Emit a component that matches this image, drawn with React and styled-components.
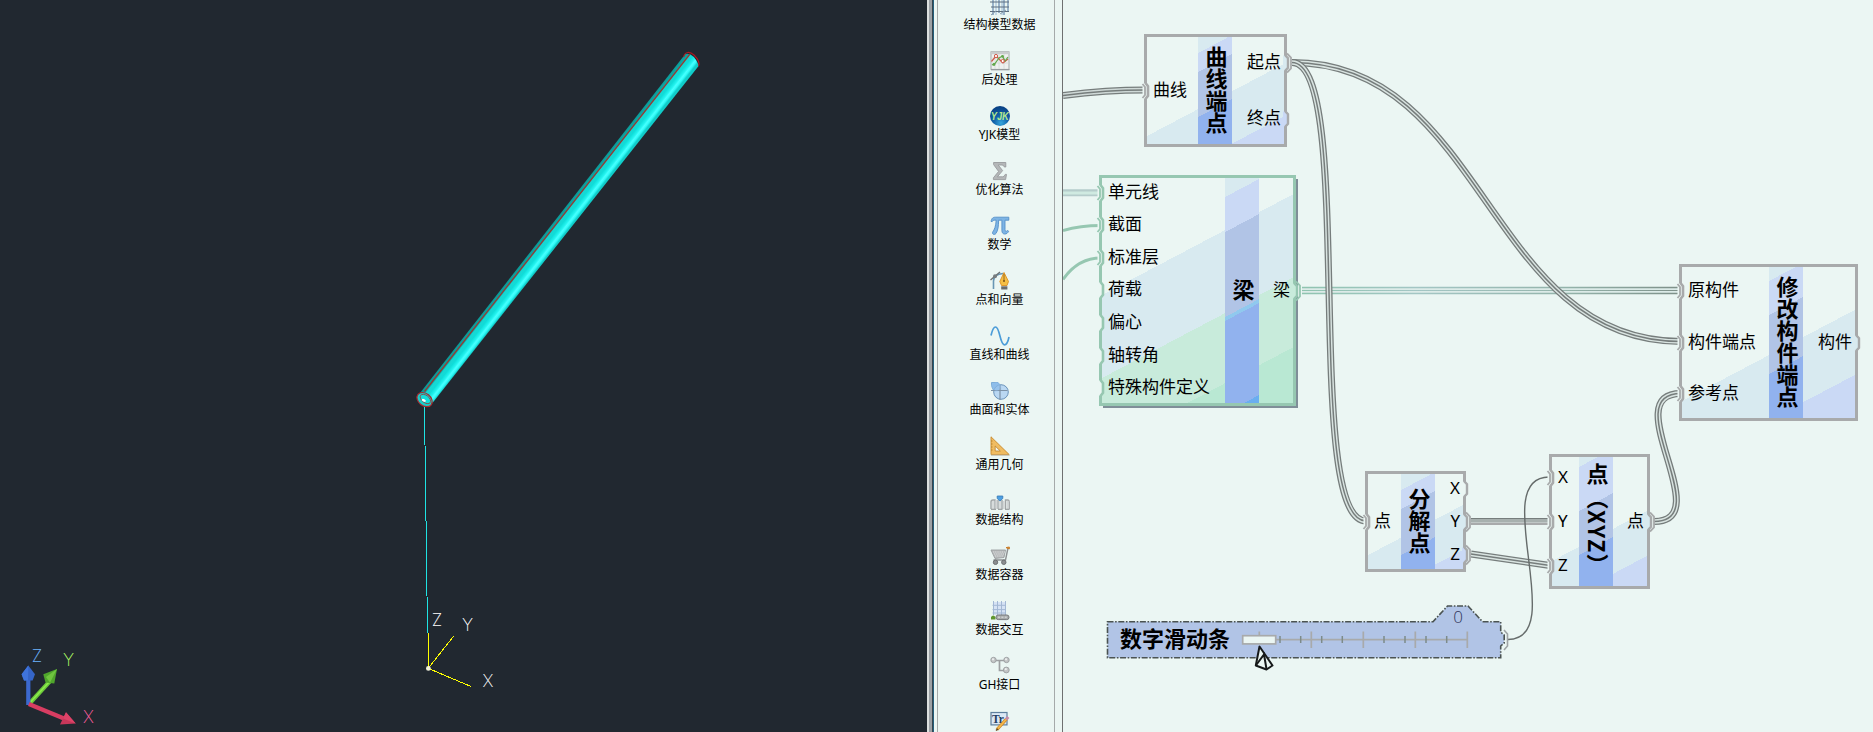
import React from 'react';
import styled, { createGlobalStyle } from 'styled-components';

const GlobalStyle = createGlobalStyle`
  html, body { margin: 0; padding: 0; overflow: hidden; background: #ebf6f3; }
  * { box-sizing: border-box; }
  body { font-family: 'Noto Sans', 'Noto Sans CJK SC', sans-serif; color: #000; }
`;

const CANVAS = '#ebf6f3';
const GREY = '#a8aaab';
const GREEN = '#96c7b1';
const WIRE = '#767d7c';

const Screen = styled.div`
  display: flex;
  width: 1873px;
  height: 732px;
  overflow: hidden;
`;

const Viewport = styled.div`
  flex: 0 0 927px;
  background: #212830;
  svg { display: block; }
`;

const AxisLabel = styled.text`
  font-family: 'Inter', 'Roboto', sans-serif;
  font-weight: 200;
  font-size: 17px;
  text-anchor: middle;
  dominant-baseline: central;
  fill: ${(p) => p.$color};
`;

const Splitter = styled.div`
  flex: 0 0 7px;
  border-left: 2px solid #dde0df;
  border-right: 1px solid #24607c;
  background: linear-gradient(to right, #9ca1a5 0 3px, #36444e 3px 4px);
`;

const Sidebar = styled.div`
  flex: 0 0 129px;
  display: flex;
  padding: 0 7px 0 3px;
  border-right: 1px solid #6e7070;
  background: ${CANVAS};
`;

const SidebarList = styled.div`
  flex: 1;
  border-left: 1px solid #a5aaaa;
  border-right: 1px solid #a5aaaa;
  padding-left: 7px;
  overflow: hidden;
`;

const SidebarStack = styled.div`
  display: flex;
  flex-direction: column;
  margin-top: -4px;
`;

const SidebarItem = styled.div`
  display: flex;
  flex-direction: column;
  align-items: center;
  height: 55px;
  flex: none;
  font-size: 12px;
  line-height: 17px;
  white-space: nowrap;
  svg { display: block; overflow: visible; }
`;

const Canvas = styled.div`
  position: relative;
  flex: 1;
  background: ${CANVAS};
  overflow: hidden;
`;

const WireLayer = styled.svg`
  position: absolute;
  inset: 0;
`;

const NodeBox = styled.div`
  position: absolute;
  display: flex;
  left: ${(p) => p.$x}px;
  top: ${(p) => p.$y}px;
  width: ${(p) => p.$w}px;
  height: ${(p) => p.$h}px;
  border: 3px solid ${(p) => p.$line};
  background: ${(p) => p.$bg};
  box-shadow: ${(p) => (p.$shadow ? '3px 3px 0 -1px #7f8e98' : 'none')};
`;

const PortColumn = styled.div`
  display: flex;
  flex-direction: column;
  justify-content: ${(p) => (p.$single ? 'center' : 'space-between')};
  ${(p) => (p.$w ? `flex: 0 0 ${p.$w}px;` : 'flex: 1;')}
`;

const PortRow = styled.div`
  position: relative;
  display: flex;
  align-items: center;
  justify-content: ${(p) => (p.$out ? 'flex-end' : 'flex-start')};
  height: ${(p) => p.$h}px;
  padding: ${(p) => (p.$out ? '0 3px 2px 0' : '0 0 2px 6px')};
  font-size: 17px;
  line-height: 20px;
  white-space: nowrap;
`;

const PortMark = styled.svg`
  position: absolute;
  top: calc(50% - 11px);
  ${(p) => (p.$out ? 'right: -9px;' : 'left: -5px;')}
  overflow: visible;
`;

const TitleBand = styled.div`
  flex: 0 0 34px;
  display: flex;
  align-items: center;
  justify-content: center;
  padding: 0 0 2px 3px;
  background: ${(p) => p.$bg};
`;

const Title = styled.span`
  writing-mode: vertical-rl;
  font-family: 'Noto Sans CJK SC', sans-serif;
  font-size: 22px;
  font-weight: 700;
  line-height: 30px;
  letter-spacing: ${(p) => p.$tracking || 0}px;
  white-space: nowrap;
`;

// Diagonal bands: each stop is [height at the left edge, colour of the band below it]
const bands = (first, stops) => {
  const parts = [];
  let colour = first;
  let from = '0px';
  stops.forEach(([y, next]) => {
    const at = `${(y * 0.8847).toFixed(1)}px`;
    parts.push(`${colour} ${from} ${at}`);
    colour = next;
    from = at;
  });
  parts.push(`${colour} ${from} 100%`);
  return `linear-gradient(152.2deg, ${parts.join(', ')})`;
};

const InPort = ({ linked, line }) => (
  <PortMark width="10" height="22">
    <path d="M0.5 3.5H3.5L6 6.5V15.5L3.5 18.5H0.5Z" fill={CANVAS} />
    <path d="M3.5 3L6 6.2V15.8L3.5 19" fill="none" stroke={line} strokeWidth="2.6" />
    {linked && <path d="M0.5 4L3 7V15L0.5 18" fill="none" stroke={line} strokeWidth="1.8" />}
  </PortMark>
);

const OutPort = ({ linked, line, fill }) => (
  <PortMark width="10" height="22" $out>
    <path d="M0 3.5H1.5L4.5 6.5V15.5L1.5 18.5H0Z" fill={fill} />
    <path d="M2 3L5 6.2V15.8L2 19" fill="none" stroke={line} strokeWidth="2.4" />
    {linked && <path d="M4 1.5L8 5.5V16.5L4 20.5" fill="none" stroke={line} strokeWidth="1.8" />}
  </PortMark>
);

const GraphNode = ({ x, y, w, h, line = GREY, bg, band, leftW, slotIn, slotOut, inputs, outputs, title, tracking, shadow }) => (
  <NodeBox $x={x} $y={y} $w={w} $h={h} $line={line} $bg={bg} $shadow={shadow}>
    <PortColumn $w={leftW} $single={inputs.length === 1}>
      {inputs.map(([name, linked]) => (
        <PortRow key={name} $h={slotIn}>
          <InPort linked={linked} line={line} />
          {name}
        </PortRow>
      ))}
    </PortColumn>
    <TitleBand $bg={band}>
      <Title $tracking={tracking}>{title}</Title>
    </TitleBand>
    <PortColumn $single={outputs.length === 1}>
      {outputs.map(([name, linked, fill]) => (
        <PortRow key={name} $h={slotOut} $out>
          <OutPort linked={linked} line={line} fill={fill} />
          {name}
        </PortRow>
      ))}
    </PortColumn>
  </NodeBox>
);

const P0 = '#ebf6f3';
const P1 = '#d8eaf0';
const P2 = '#cad9f5';
const P3 = '#b1c4e6';
const P4 = '#91b2ee';

const nodes = [
  {
    x: 81, y: 34, w: 143, h: 113, leftW: 51, slotIn: 30, slotOut: 51, title: '曲线端点',
    bg: bands(P0, [[99, P1], [151.5, P2]]),
    band: bands(P1, [[16, P2], [35, P3], [80, P4]]),
    inputs: [['曲线', true]],
    outputs: [['起点', true, P1], ['终点', false, P2]],
  },
  {
    x: 36, y: 175, w: 197, h: 231, leftW: 123, slotIn: 29, slotOut: 30, title: '梁', line: GREEN, shadow: true,
    bg: bands(P0, [[117, P1], [200, '#c8ebdb'], [270, '#b9e8d3']]),
    band: bands(P1, [[19, P2], [54, P3], [139, '#90c9ee'], [143, P4], [235, '#6aaef0']]),
    inputs: [['单元线', true], ['截面', true], ['标准层', true], ['荷载', false], ['偏心', false], ['轴转角', false], ['特殊构件定义', false]],
    outputs: [['梁', true, '#c8ebdb']],
  },
  {
    x: 302, y: 471, w: 101, h: 101, leftW: 33, slotIn: 30, slotOut: 29, title: '分解点',
    bg: bands(P0, [[81, P1], [126, P2]]),
    band: bands(P1, [[16, P2], [35, P3], [81, P4]]),
    inputs: [['点', true]],
    outputs: [['X', false, P0], ['Y', true, P1], ['Z', true, P2]],
  },
  {
    x: 486, y: 454, w: 101, h: 135, leftW: 27, slotIn: 41, slotOut: 30, title: '点（XYZ）', tracking: 1.5,
    bg: bands(P0, [[104, P1], [149, P2]]),
    band: bands(P1, [[10, P2], [54, P3], [98, P4]]),
    inputs: [['X', true], ['Y', true], ['Z', true]],
    outputs: [['点', true, P1]],
  },
  {
    x: 616, y: 264, w: 179, h: 157, leftW: 87, slotIn: 48, slotOut: 30, title: '修改构件端点',
    bg: bands(P0, [[134, P1], [199, P2]]),
    band: bands(P1, [[14, P2], [48, P3], [107, P4]]),
    inputs: [['原构件', true], ['构件端点', true], ['参考点', true]],
    outputs: [['构件', false, P1]],
  },
];

const TripleWire = ({ d, dark = WIRE, light = '#d9e4e1' }) => (
  <g fill="none">
    <path d={d} stroke={dark} strokeWidth="7" />
    <path d={d} stroke={light} strokeWidth="4.4" />
    <path d={d} stroke={dark} strokeWidth="1.5" />
  </g>
);

const Wires = () => (
  <WireLayer width="810" height="732">
    <defs>
      <linearGradient id="beamWire" gradientUnits="userSpaceOnUse" x1="239" y1="0" x2="618" y2="0">
        <stop offset="0" stopColor="#8fc4b0" />
        <stop offset="0.3" stopColor="#a3c6c4" />
        <stop offset="0.7" stopColor="#93b3aa" />
        <stop offset="1" stopColor="#7d8f88" />
      </linearGradient>
    </defs>
    <TripleWire d="M0 95.5C28 92 52 90 82 90" light="#cfd9d7" />
    <path d="M0 192.7H38" stroke="#b5cccb" strokeWidth="7" />
    <path d="M0 193H38" stroke="#cfeae1" strokeWidth="3" />
    <g fill="none" stroke={GREEN} strokeWidth="3">
      <path d="M0 230.5C12 227 24 225.5 38 225.5" />
      <path d="M0 279.5C10 265 22 258 38 258" />
    </g>
    <g fill="none" stroke="url(#beamWire)">
      <path d="M239 290.51L618 290.49" style={{ stroke: '#dcebe8' }} strokeWidth="6" />
      <path d="M239 287.51L618 287.49" strokeWidth="1.3" />
      <path d="M239 290.51L618 290.49" strokeWidth="1" />
      <path d="M239 293.51L618 293.49" strokeWidth="1.3" />
    </g>
    <TripleWire d="M229 62.5C423 62.5 424 341.5 618 341.5" />
    <TripleWire d="M229 62.5C293 62.5 239 521 303 521" />
    <TripleWire d="M591 521.5C656 521.5 552 393.5 618 393.5" />
    <g stroke={WIRE}>
      <path d="M408 521.5H487" stroke="#d9e4e1" strokeWidth="7" />
      <path d="M408 518.7H487" strokeWidth="1.4" />
      <path d="M408 521H487" strokeWidth="1.1" />
      <path d="M408 523.7H487" stroke={GREY} strokeWidth="2.4" />
    </g>
    <TripleWire d="M408 554L487 565.5" />
    <path d="M445 639.5C507 639.5 424 477 486 477" fill="none" stroke="#666c6b" strokeWidth="1.4" />
  </WireLayer>
);

const SliderNode = styled.div`
  position: absolute;
  left: 43px;
  top: 604px;
  width: 410px;
  height: 66px;
`;

const SliderShape = styled.svg`
  position: absolute;
  inset: 0;
  overflow: visible;
`;

const SliderBody = styled.div`
  position: relative;
  display: flex;
  align-items: center;
  height: 36px;
  margin-top: 18px;
  padding: 0 0 6px 14px;
`;

const SliderLabel = styled.span`
  font-family: 'Noto Sans CJK SC', sans-serif;
  font-size: 22px;
  font-weight: 700;
  line-height: 30px;
`;

const SliderValue = styled.span`
  position: absolute;
  left: 343px;
  top: 3px;
  width: 18px;
  text-align: center;
  font-family: 'Open Sans', 'Noto Sans', sans-serif;
  font-weight: 300;
  font-size: 17px;
  line-height: 20px;
  color: #30355a;
`;

const majors = [205.3, 257.3, 309.3, 361.3];
const minors = [174, 194.7, 215.7, 236.3, 278, 299, 320, 340.7];

const Slider = () => (
  <SliderNode>
    <SliderShape width="410" height="66">
      <path
        d="M1.5 17.7H327L341.5 2H362L376.5 17.7H394.7V28L398.2 31V39L394.7 42V53.7H1.5Z"
        fill={P3} stroke="#4b5352" strokeWidth="1.6" strokeDasharray="6 1.6 1.6 1.6"
      />
      <path d="M398 26L401.5 30V42L398 46" fill="none" stroke="#9ea3a5" strokeWidth="1.6" />
      <g stroke={GREY} strokeWidth="1.7">
        <path d="M170 35.6H361.5M153.3 27.5V33" />
        {majors.map((x) => <path key={x} d={`M${x} 27.5V44`} />)}
      </g>
      <g stroke="#7d8b89" strokeWidth="1.5">
        {minors.map((x) => <path key={x} d={`M${x} 32V39`} />)}
      </g>
      <rect x="136.7" y="31.7" width="33" height="8.2" fill={CANVAS} stroke={GREY} strokeWidth="1.7" />
      <path d="M153.5 42.5L149.8 61.5L160.5 65.5L166.5 61.5Z" fill={CANVAS} stroke="#16191a" strokeWidth="2" strokeLinejoin="round" />
      <path d="M149.8 61.5L158 50.5L160.5 65" fill="none" stroke="#16191a" strokeWidth="2" />
    </SliderShape>
    <SliderBody>
      <SliderLabel>数字滑动条</SliderLabel>
    </SliderBody>
    <SliderValue>0</SliderValue>
  </SliderNode>
);

const IconSvg = ({ children }) => (
  <svg width="20" height="20" viewBox="0 0 20 20" fill="none">{children}</svg>
);

const GlyphText = styled.text`
  font-family: ${(p) => p.$family || "'Liberation Serif', serif"};
  font-weight: 700;
  font-style: ${(p) => (p.$italic ? 'italic' : 'normal')};
  font-size: ${(p) => p.$size}px;
  text-anchor: middle;
`;

const icons = {
  frame: (
    <IconSvg>
      <path d="M3 0V19M9 0V17M14 0V19M18 0V16" stroke="#7898b8" strokeWidth="1.4" />
      <path d="M6 0V19M12 0V19" stroke="#a9c4dc" strokeWidth="1.2" />
      <path d="M0 6H19M1 11H19M0 15.5H19" stroke="#5f6f80" strokeWidth="1.2" />
      <path d="M1 19L6 15M10 18L16 14" stroke="#889cae" />
    </IconSvg>
  ),
  chart: (
    <IconSvg>
      <rect x="1" y="0.8" width="18" height="17.6" fill="#eef0ef" stroke="#a4a8aa" />
      <path d="M1 2H19" stroke="#c9cccd" strokeWidth="2.4" />
      <path d="M5 3V18M9 3V18M14 3V18M1 7H19M1 12H19" stroke="#d3d8d6" strokeWidth="0.8" />
      <path d="M1.5 10.5L6 5L10 9L13 12L18 8" stroke="#cf5a4a" strokeWidth="1.2" />
      <path d="M2 14L5 12.5L9 7L12.5 5L15 10L18 6" stroke="#62a84b" strokeWidth="1.2" />
      <circle cx="6" cy="5" r="1.6" fill="#fff" stroke="#cf5a4a" />
      <circle cx="12.7" cy="10" r="1.6" fill="#fff" stroke="#cf5a4a" />
      <circle cx="4" cy="13.5" r="1.4" fill="#62a84b" />
      <circle cx="12.5" cy="5.3" r="1.4" fill="#62a84b" />
      <path d="M1 18.8H19.5" stroke="#8e9295" />
    </IconSvg>
  ),
  yjk: (
    <IconSvg>
      <defs>
        <radialGradient id="globe" cx="0.55" cy="0.85" r="0.9">
          <stop offset="0" stopColor="#35a6dc" />
          <stop offset="0.4" stopColor="#1263ab" />
          <stop offset="1" stopColor="#063a7c" />
        </radialGradient>
      </defs>
      <circle cx="10" cy="10" r="10" fill="url(#globe)" />
      <GlyphText x="9.8" y="13.8" $size={10.5} $italic $family="'Liberation Sans', sans-serif" textLength="18" lengthAdjust="spacingAndGlyphs" fill="#b4e88c">YJK</GlyphText>
    </IconSvg>
  ),
  sigma: (
    <IconSvg>
      <path d="M3.6 1.5H15.8V6H14.3Q14 4 12 4H8.2L12.6 9.6L7.4 15.8H12.5Q14.6 15.8 15.2 13.4H16.5L15.6 18.6H3.4V16.8L8.6 10.4L3.6 3.6Z" fill="#b4b7b8" stroke="#989b9d" strokeWidth="0.9" />
    </IconSvg>
  ),
  pi: (
    <IconSvg>
      <path d="M1 5.4C1.8 2 3 1.2 5.5 1.2H18.8V4.2H15V13.6C15 15.6 16.6 15.8 17.8 14.4L18.6 15.2C17.4 18.8 11.9 19.4 11.9 14.6V4.2H8.6C8.6 10 8 14.5 6 17.4C4.6 19.2 2 18.6 2.6 16.2C4.6 13.6 5.8 10 6.2 4.2C4 4 3 4.2 2.2 5.6Z" fill="#7db4e4" stroke="#5590c8" strokeWidth="0.9" />
    </IconSvg>
  ),
  pen: (
    <IconSvg>
      <path d="M3.5 18V10C3.5 5 7 3 13 2.5" stroke="#6896b4" strokeWidth="1.6" />
      <path d="M0.5 9L10 1" stroke="#6d7274" strokeWidth="1.4" />
      <circle cx="5" cy="5.2" r="2" fill="#777c7e" />
      <path d="M14 1.5L18.5 10.5L17 14.5H11.5L9.8 10.5Z" fill="#f5bf45" stroke="#dc9024" strokeWidth="0.9" />
      <path d="M14 3V10" stroke="#9c6a1c" />
      <circle cx="14" cy="10" r="1" fill="#7c5214" />
      <rect x="11.2" y="15.3" width="6.2" height="3.2" fill="#6a6d6f" />
    </IconSvg>
  ),
  wave: (
    <IconSvg>
      <path d="M1 9.5C2.5 3 4 1 5.5 1C10 1 9.8 18.8 14.4 18.8C16.5 18.8 18 16 19 11" stroke="#4b9cd8" strokeWidth="1.7" />
    </IconSvg>
  ),
  solid: (
    <IconSvg>
      <path d="M1.5 1.5H8L11 6V9L6 10.5C3 10 1.2 6 1.5 1.5Z" fill="#8fc0ec" stroke="#6d9fd0" strokeWidth="0.8" />
      <circle cx="11" cy="11" r="7.3" fill="#b5d5f2" fillOpacity="0.9" stroke="#6a93ba" />
      <path d="M1 9.5H17.5M10 4V19" stroke="#7d92a6" strokeWidth="1.2" />
      <circle cx="6.5" cy="5.5" r="4.2" fill="#8dbcea" fillOpacity="0.7" />
    </IconSvg>
  ),
  ruler: (
    <IconSvg>
      <path d="M1 0.8L19.2 18.6H1Z" fill="#f0bc62" stroke="#c88a2e" strokeWidth="0.9" />
      <path d="M5.2 10L10.3 15H5.2Z" fill="#f4f6ee" stroke="#b9822f" strokeWidth="0.8" />
      <path d="M1 5H2.6M1 8H2.6M1 11H2.6M1 14H2.6" stroke="#a8731f" strokeWidth="0.7" />
      <path d="M1 19.3H19.5" stroke="#c4c4ba" />
    </IconSvg>
  ),
  array: (
    <IconSvg>
      <path d="M1 18V11Q1 9 3 9H5V18M8 18V9M12 18V9M15.5 18V9H18Q19.2 9 19.2 11V18" stroke="#a2a5a7" strokeWidth="1.4" />
      <path d="M3 18V10M6.3 18V9M10 18V10M13.8 18V10M17.5 18V10" stroke="#d3d5d6" strokeWidth="1.6" />
      <path d="M1 18.3H6M8 18.3H12.5M15 18.3H19.5" stroke="#8c9092" />
      <path d="M7.2 5H12.8V7.5L10 10L7.2 7.5Z" fill="#4d9fe2" stroke="#3578b4" strokeWidth="0.8" />
    </IconSvg>
  ),
  cart: (
    <IconSvg>
      <path d="M1 4H15.5L14 11.5L5 12.5Z" fill="#b7babb" stroke="#9b9ea0" strokeWidth="0.9" />
      <path d="M3 6H15M4 8H14.5M5 10H14" stroke="#e4e6e6" strokeWidth="0.8" strokeDasharray="1.2 1" />
      <path d="M18 2L15.5 14H3.5" stroke="#8d9092" strokeWidth="1.4" />
      <path d="M16 1.6L19.3 1V3Z" fill="#e2963c" stroke="#c97e2a" />
      <circle cx="5.5" cy="16.3" r="2.2" fill="#8b8e90" stroke="#6d7072" />
      <circle cx="13.8" cy="16.3" r="2.2" fill="#8b8e90" stroke="#6d7072" />
    </IconSvg>
  ),
  exchange: (
    <IconSvg>
      <rect x="3.5" y="1" width="12" height="13" fill="#d5e2f4" />
      <path d="M3.5 0V14M7.5 0V14M11.5 0V14M15.5 0V14M2.5 4.3H16M2.5 8.6H16M2.5 12H16" stroke="#a3b8d4" />
      <path d="M1 18.5V16Q3 13 5.5 16V18.5Z" fill="#5f962f" />
      <rect x="6" y="14" width="13" height="4.6" rx="2.2" fill="#a9acad" stroke="#77797b" />
      <path d="M8 16.2H17" stroke="#dfe1e1" strokeDasharray="2 1.4" />
    </IconSvg>
  ),
  tree: (
    <IconSvg>
      <path d="M4 4.5H17M9.5 4.5V14.5H15" stroke="#9da0a2" strokeWidth="1.7" />
      <circle cx="3.5" cy="4" r="2.7" fill="#c2c4c5" stroke="#9b9ea0" strokeWidth="0.9" />
      <circle cx="16.5" cy="4" r="2.7" fill="#c2c4c5" stroke="#9b9ea0" strokeWidth="0.9" />
      <circle cx="16.3" cy="14" r="2.9" fill="#c2c4c5" stroke="#9b9ea0" strokeWidth="0.9" />
      <circle cx="3" cy="3.3" r="1.1" fill="#eceeee" />
      <circle cx="16" cy="3.3" r="1.1" fill="#eceeee" />
      <circle cx="15.8" cy="13.2" r="1.1" fill="#eceeee" />
    </IconSvg>
  ),
  textEdit: (
    <IconSvg>
      <rect x="1" y="1.5" width="16" height="12.4" fill="#dbe8f4" stroke="#5e7f9d" strokeWidth="1.2" />
      <GlyphText x="8" y="12" $size={11.5} fill="#243f63">Tr</GlyphText>
      <path d="M7 18.5L16.5 8" stroke="#c98528" strokeWidth="3.2" />
      <path d="M7.3 18.2L16.5 8" stroke="#f6b94a" strokeWidth="1.8" />
      <path d="M16 8.6L18.3 6" stroke="#c58aa6" strokeWidth="3" />
      <path d="M6 19.5L8 17.8" stroke="#6b4a20" strokeWidth="1.6" />
    </IconSvg>
  ),
};

const menu = [
  ['frame', '结构模型数据'], ['chart', '后处理'], ['yjk', 'YJK模型'], ['sigma', '优化算法'], ['pi', '数学'],
  ['pen', '点和向量'], ['wave', '直线和曲线'], ['solid', '曲面和实体'], ['ruler', '通用几何'], ['array', '数据结构'],
  ['cart', '数据容器'], ['exchange', '数据交互'], ['tree', 'GH接口'], ['textEdit', ''],
];

const ModelView = () => (
  <svg width="927" height="732">
    <defs>
      <linearGradient id="tube" gradientUnits="userSpaceOnUse" x1="420" y1="393" x2="432.7" y2="402.9">
        <stop offset="0" stopColor="#0c9694" />
        <stop offset="0.22" stopColor="#0aa8a5" />
        <stop offset="0.3" stopColor="#1ad6d2" />
        <stop offset="0.5" stopColor="#0fdcd8" />
        <stop offset="0.68" stopColor="#22f2ee" />
        <stop offset="0.78" stopColor="#48ffff" />
        <stop offset="0.88" stopColor="#30fbf8" />
        <stop offset="1" stopColor="#10cdca" />
      </linearGradient>
    </defs>
    <path d="M685.3 54Q693 52 699 65.5L432.7 402.7L420 393Z" fill="url(#tube)" />
    <path d="M690 54L424.5 391.5" stroke="#963a34" strokeWidth="1.3" />
    <path d="M683.5 57C685 51 690 51.5 694 55C698 59 700 63 698.5 66" fill="none" stroke="#b01820" strokeWidth="1.1" />
    <ellipse cx="424.6" cy="399.6" rx="8.4" ry="6.2" transform="rotate(38 424.6 399.6)" fill="#18cfcb" stroke="#a82a30" strokeWidth="1.2" />
    <ellipse cx="425.4" cy="399" rx="6" ry="3.6" transform="rotate(38 425.4 399)" fill="#12dedb" stroke="#8d4b4c" strokeWidth="0.9" />
    <ellipse cx="423.8" cy="400.4" rx="2.2" ry="1.3" transform="rotate(25 423.8 400.4)" fill="#fff" />
    <path d="M424.5 407L427.5 633" stroke="#1fe3e3" shapeRendering="crispEdges" />
    <g stroke="#ffff00" shapeRendering="crispEdges" fill="none">
      <path d="M428.5 633V668M428.5 668L453.7 636M428.5 668.5L471 686.5" />
    </g>
    <circle cx="428.4" cy="668.4" r="2.4" fill="#f2f2dc" />
    <AxisLabel x="437" y="620" $color="#fff">Z</AxisLabel>
    <AxisLabel x="467.5" y="624.5" $color="#fff">Y</AxisLabel>
    <AxisLabel x="488" y="681" $color="#fff">X</AxisLabel>

    <path d="M29 704L51 680" stroke="#6cc93a" strokeWidth="4.2" />
    <path d="M30.5 702L51 680" stroke="#8fee4e" strokeWidth="1.4" />
    <path d="M57 669L43.3 674.3L45.5 682.5L54.3 683.6Z" fill="#4fa52c" />
    <path d="M57 669L46 677L50 682.8Z" fill="#6fc43f" />
    <path d="M28.3 705V679" stroke="#3c69cf" strokeWidth="4.2" />
    <path d="M28.3 665.5L21.6 674.3L24 680.6H32.6L35 674.3Z" fill="#3565c8" />
    <path d="M28.3 665.5L21.6 674.3L24 680.6H28Z" fill="#3f74dc" />
    <path d="M28.8 704L64 718.5" stroke="#d83d62" strokeWidth="4.2" />
    <path d="M75.7 723.6L66 712.3L60 724.4Z" fill="#c8375a" />
    <path d="M75.7 723.6L66 712.3L63 718.5Z" fill="#dd4368" />
    <AxisLabel x="37" y="656" $color="#6db4ff">Z</AxisLabel>
    <AxisLabel x="68.6" y="660" $color="#b0ff66">Y</AxisLabel>
    <AxisLabel x="88.4" y="716.5" $color="#ff5fa0">X</AxisLabel>
  </svg>
);

export default function App() {
  return (
    <Screen>
      <GlobalStyle />
      <Viewport>
        <ModelView />
      </Viewport>
      <Splitter />
      <Sidebar>
        <SidebarList>
          <SidebarStack>
            {menu.map(([icon, label]) => (
              <SidebarItem key={icon}>
                {icons[icon]}
                {label && <span>{label}</span>}
              </SidebarItem>
            ))}
          </SidebarStack>
        </SidebarList>
      </Sidebar>
      <Canvas>
        <Wires />
        {nodes.map((n) => <GraphNode key={n.title} {...n} />)}
        <Slider />
      </Canvas>
    </Screen>
  );
}
